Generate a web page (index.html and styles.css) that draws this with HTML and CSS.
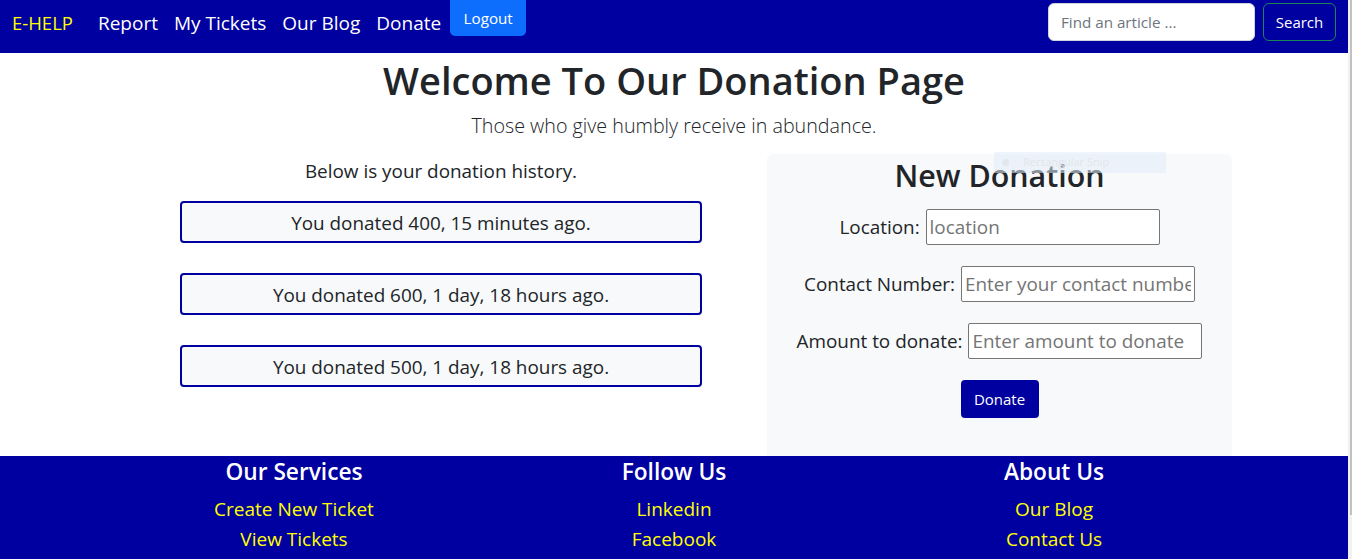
FILE: index.html
```html
<!DOCTYPE html>
<html lang="en">
<head>
<meta charset="utf-8">
<title>E-HELP | Donate</title>
<link rel="stylesheet" href="styles.css">
</head>
<body>
<nav class="navbar">
  <a class="brand" href="#">E-HELP</a>
  <ul class="nav-links">
    <li><a href="#">Report</a></li>
    <li><a href="#">My Tickets</a></li>
    <li><a href="#">Our Blog</a></li>
    <li><a href="#">Donate</a></li>
  </ul>
  <button class="btn-logout" type="button">Logout</button>
  <form class="search">
    <input class="search-input" type="search" placeholder="Find an article ...">
    <button class="btn-search" type="button">Search</button>
  </form>
</nav>

<main class="main">
  <h1 class="title">Welcome To Our Donation Page</h1>
  <p class="lead">Those who give humbly receive in abundance.</p>
  <div class="row">
    <section class="history">
      <p class="history-intro">Below is your donation history.</p>
      <div class="entry">You donated 400, 15 minutes ago.</div>
      <div class="entry">You donated 600, 1 day, 18 hours ago.</div>
      <div class="entry">You donated 500, 1 day, 18 hours ago.</div>
    </section>
    <section class="panel">
      <h2 class="panel-title">New Donation</h2>
      <form class="donate-form">
        <div class="field"><label for="loc">Location:</label><input id="loc" class="text-input" type="text" placeholder="location"></div>
        <div class="field"><label for="phone">Contact Number:</label><input id="phone" class="text-input" type="text" placeholder="Enter your contact number"></div>
        <div class="field"><label for="amt">Amount to donate:</label><input id="amt" class="text-input" type="text" placeholder="Enter amount to donate"></div>
        <button class="btn-donate" type="button">Donate</button>
      </form>
      <div class="snip"><span class="snip-dot"></span><span class="snip-text">Rectangular Snip</span></div>
    </section>
  </div>
</main>

<footer class="footer">
  <div class="footer-cols">
    <div class="footer-col">
      <h4 class="footer-title">Our Services</h4>
      <a href="#">Create New Ticket</a>
      <a href="#">View Tickets</a>
    </div>
    <div class="footer-col">
      <h4 class="footer-title">Follow Us</h4>
      <a href="#">Linkedin</a>
      <a href="#">Facebook</a>
    </div>
    <div class="footer-col">
      <h4 class="footer-title">About Us</h4>
      <a href="#">Our Blog</a>
      <a href="#">Contact Us</a>
    </div>
  </div>
</footer>
</body>
</html>
```

FILE: styles.css
```css
html {
  overflow: hidden;
  background:
    linear-gradient(90deg, transparent 0 1350px, #c1c1c1 1350px 1352px) 0 0 / 100% 515px no-repeat,
    #f1f1f1;
}
body {
  margin: 0;
  width: 1348px;
  background: #fff;
  font-family: "Open Sans", "Noto Sans", "Liberation Sans", sans-serif;
  color: #212529;
  font-size: 15.2px;
  line-height: 1.5;
}
a { text-decoration: none; }

/* navbar */
.navbar {
  height: 53px;
  background: #0000a0;
  display: flex;
  align-items: flex-start;
  padding: 0 12px;
  box-sizing: border-box;
}
.brand {
  color: #ffff00;
  font-size: 18.5px;
  line-height: 30px;
  padding-top: 8px;
  margin-right: 17px;
}
.nav-links {
  list-style: none;
  margin: 0;
  padding: 8px 0 0;
  display: flex;
}
.nav-links a {
  display: block;
  color: #fff;
  font-size: 19px;
  line-height: 30px;
  padding: 0 8px;
}
.btn-logout {
  margin-left: 1px;
  height: 36px;
  width: 76px;
  padding: 0;
  background: #0d6efd;
  color: #fff;
  border: 0;
  border-radius: 0 0 5px 5px;
  font: inherit;
  font-size: 15.2px;
}
.search {
  margin-left: auto;
  padding-top: 3px;
  display: flex;
  gap: 8px;
}
.search-input {
  width: 207px;
  height: 38px;
  box-sizing: border-box;
  border: 1px solid #ced4da;
  border-radius: 6px;
  padding: 6px 12px;
  font: inherit;
  font-size: 15.2px;
  color: #212529;
  background: #fff;
}
.search-input::placeholder { color: #6c757d; }
.btn-search {
  width: 73px;
  height: 38px;
  box-sizing: border-box;
  background: transparent;
  border: 1px solid #198754;
  border-radius: 6px;
  color: #fff;
  font: inherit;
  font-size: 15px;
  padding: 0;
}

/* main */
.main { padding-top: 3px; }
.title {
  margin: 0;
  text-align: center;
  font-size: 38px;
  font-weight: 600;
  line-height: 48px;
}
.lead {
  margin: 7px 0 0;
  text-align: center;
  font-size: 19.7px;
  font-weight: 300;
  line-height: 30px;
}
.row {
  width: 1140px;
  margin: 13px auto 0;
  display: flex;
  align-items: flex-start;
}
.history {
  width: 522px;
  margin-left: 76px;
  padding-top: 2px;
}
.history-intro {
  margin: 0 0 15px;
  text-align: center;
  font-size: 18.9px;
  line-height: 30px;
}
.entry {
  border: 2px solid #0000a0;
  border-radius: 4px;
  background: #f8f9fa;
  padding: 5px 0 3px;
  text-align: center;
  font-size: 18.9px;
  line-height: 30px;
  margin-bottom: 30px;
}
.panel {
  position: relative;
  width: 465px;
  height: 302px;
  margin-left: 65px;
  box-sizing: border-box;
  padding-top: 3px;
  background: #f8f9fa;
  border-radius: 6px 6px 0 0;
}
.panel-title {
  margin: 0;
  text-align: center;
  font-size: 30.4px;
  font-weight: 600;
  line-height: 38px;
}
.donate-form {
  margin-top: 14px;
  display: flex;
  flex-direction: column;
  align-items: center;
  gap: 21px;
}
.field {
  display: flex;
  align-items: center;
  gap: 6px;
  font-size: 18.9px;
  height: 36px;
}
.text-input {
  width: 234px;
  height: 36px;
  box-sizing: border-box;
  border: 1px solid #767676;
  border-radius: 2px;
  padding: 1px 3px;
  font: inherit;
  font-size: 18.9px;
  background: #fff;
}
.text-input::placeholder { color: #757575; }
.btn-donate {
  width: 78px;
  height: 38px;
  background: #0000a0;
  color: #fff;
  border: 0;
  border-radius: 4px;
  font: inherit;
  font-size: 15px;
}
.snip {
  position: absolute;
  left: 227px;
  top: -2px;
  width: 172px;
  height: 21px;
  background: rgba(225, 236, 249, 0.55);
  display: flex;
  align-items: center;
  font-size: 11px;
  color: #e2e5e8;
}
.snip-dot {
  width: 7px;
  height: 7px;
  border-radius: 50%;
  background: #e3e7ec;
  margin: 0 14px 0 8px;
}

/* footer */
.footer {
  background: #0000a0;
  height: 140px;
  padding-top: 1px;
}
.footer-cols {
  width: 1140px;
  margin: 0 auto;
  display: grid;
  grid-template-columns: repeat(3, 1fr);
}
.footer-col {
  display: flex;
  flex-direction: column;
  align-items: center;
}
.footer-title {
  margin: 0 0 8px;
  color: #fff;
  font-size: 22.7px;
  font-weight: 600;
  line-height: 29px;
}
.footer-col a {
  color: #ffff00;
  font-size: 19px;
  line-height: 30px;
}
```
